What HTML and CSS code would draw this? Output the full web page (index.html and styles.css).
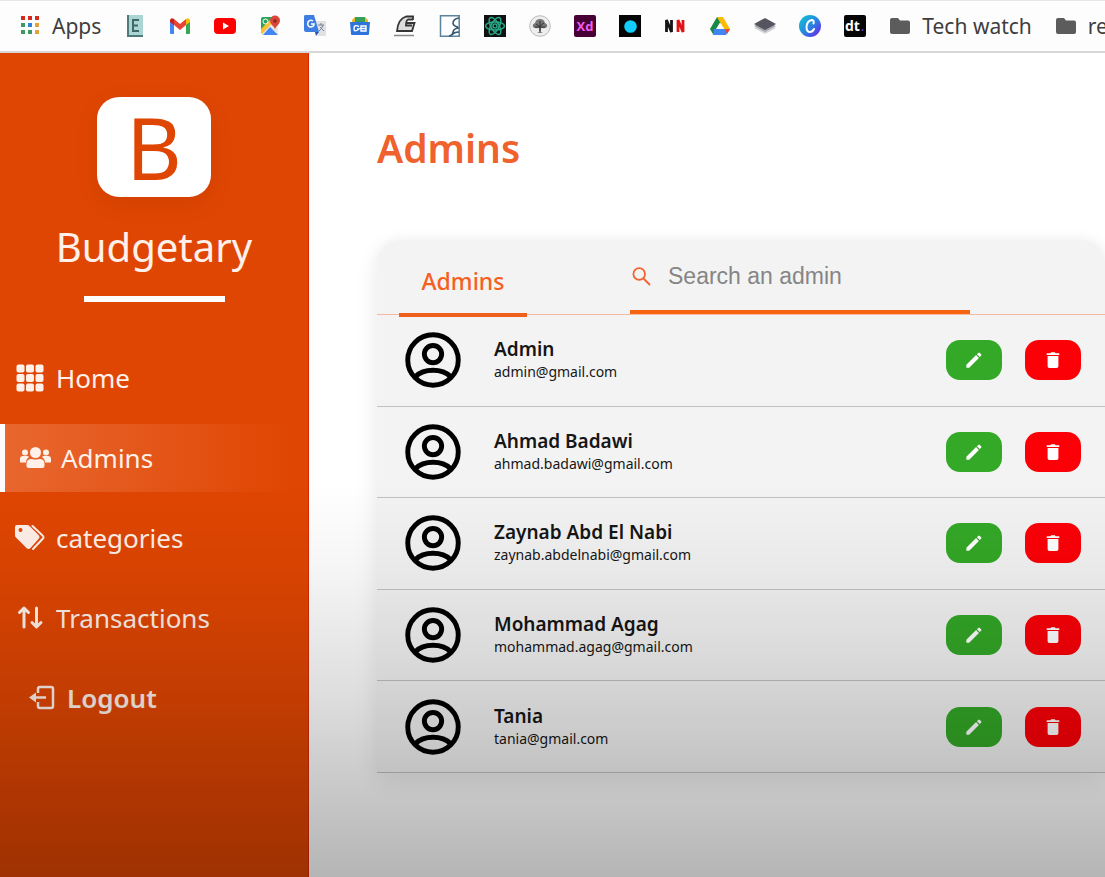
FILE: index.html
```html
<!DOCTYPE html>
<html lang="en">
<head>
<meta charset="utf-8">
<meta name="viewport" content="width=device-width, initial-scale=1">
<title>Budgetary - Admins</title>
<link rel="stylesheet" href="styles.css">
</head>
<body>
<svg class="sprite" aria-hidden="true">
  <symbol id="avatar" viewBox="0 0 57 57">
    <g fill="none" stroke="#000" stroke-width="5">
      <circle cx="28.500" cy="28.500" r="25.700"/>
      <circle cx="28.500" cy="22.500" r="8.800"/>
      <path d="M10.500 45.500C15 41 22 39 28.500 39s13.500 2 18 6.500"/>
    </g>
  </symbol>
  <symbol id="pencil" viewBox="0 0 20 20">
    <path fill="currentColor" d="M1.500 15.300 12.300 4.500l3.200 3.200L4.700 18.500H1.500zM13.200 3.600l1.500-1.500q.9-.8 1.800 0l1.400 1.400q.8.900 0 1.800l-1.500 1.500z"/>
  </symbol>
  <symbol id="trash" viewBox="0 0 20 20">
    <path fill="currentColor" d="M3 2.500h4L8 1.300h4l1 1.200h4v2H3zM4 5.500h12V17q0 2-2 2H6q-2 0-2-2z"/>
  </symbol>
  <symbol id="folder" viewBox="0 0 22 22">
    <path fill="#5c5c5c" d="M1 5q0-2 2-2h6l2 2.500h8q2 0 2 2V17q0 2-2 2H3q-2 0-2-2z"/>
  </symbol>
</svg>

<nav class="bookmarks" aria-label="Bookmarks">
  <a class="bookmark apps" href="#">
    <svg class="favicon" viewBox="0 0 22 22" aria-hidden="true">
      <path fill="#d62b1f" d="M2 1h4v4H2zM9 1h4v4H9zM16 1h4v4h-4z"/>
      <path fill="#3f9a62" d="M2 8h4v4H2zM2 15h4v4H2zM9 15h4v4H9z"/>
      <path fill="#2f82dc" d="M9 8h4v4H9z"/>
      <path fill="#e3a139" d="M16 8h4v4h-4zM16 15h4v4h-4z"/>
    </svg>
    <span>Apps</span>
  </a>
  <a class="bookmark" href="#" aria-label="E"><svg class="favicon" viewBox="0 0 22 22"><path fill="#a9d5d2" d="M3 0h16v22H3z"/><path fill="#507a7a" d="M3 0h2v22H3zM3 20h16v2H3z"/><path fill="none" stroke="#40666a" stroke-width="2" d="M15 5H9v11h6M9 10.500h5"/></svg></a>
  <a class="bookmark" href="#" aria-label="Gmail"><svg class="favicon" viewBox="0 0 22 22"><path fill="#4285f4" d="M1 6l4 3v10H2q-1 0-1-1z"/><path fill="#34a853" d="M17 9l4-3v12q0 1-1 1h-3z"/><path fill="#ea4335" d="M5 4l6 5 6-5v6l-6 5-6-5z"/><path fill="#c5221f" d="M1 5q1-3 4-1v6L1 7z"/><path fill="#fbbc04" d="M21 5q-1-3-4-1v6l4-3z"/></svg></a>
  <a class="bookmark" href="#" aria-label="YouTube"><svg class="favicon" viewBox="0 0 22 22"><rect y="3" width="22" height="16" rx="4" fill="#f00"/><path fill="#fff" d="M9 7.500l6 3.500-6 3.500z"/></svg></a>
  <a class="bookmark" href="#" aria-label="Maps"><svg class="favicon" viewBox="0 0 22 22"><rect x="2" y="2" width="17" height="18" rx="2" fill="#e6e7e8"/><path fill="#2ca45c" d="M4 2h12L2 16V4q0-2 2-2z"/><path fill="#fbc02d" d="M2 18v-4L14 2l3 2L3 19z"/><path fill="#4285f4" d="M4 20l7-8 8 8z"/><circle cx="6.500" cy="6.500" r="2.500" fill="none" stroke="#fff"/><path fill="#d9453a" d="M16 15c0-4-5-5-5-9.500a5 5 0 0 1 10 0C21 10 16 11 16 15z"/><circle cx="16" cy="6" r="1.800" fill="#8c2720"/></svg></a>
  <a class="bookmark" href="#" aria-label="Translate"><svg class="favicon" viewBox="0 0 22 22"><path fill="#dfe2e5" d="M9 6h12q1 0 1 1v13q0 1-1 1h-7z"/><path fill="#3f7de0" d="M1 0h9l5 17H2q-2 0-2-2V2q0-2 1-2z"/><path fill="#2b53a5" d="M11 17h4l-3 4z"/><path fill="none" stroke="#fff" stroke-width="1.500" d="M9 6Q6 4 4 7q-1 4 2 5 4 0 4-3H7"/><path fill="none" stroke="#78838e" d="M14 10h6M17 8v2M19 10q-1 4-4 6M16 12l4 4"/></svg></a>
  <a class="bookmark" href="#" aria-label="Classroom"><svg class="favicon" viewBox="0 0 22 22"><path fill="#e9b62c" d="M3 5l3-3h10l3 3v3H3z"/><path fill="#36a05b" d="M6 2h10v5H6z"/><path fill="#2f74dd" d="M1 7h20l-1 12q0 1-1 1H3q-1 0-1-1z"/><path fill="none" stroke="#fff" stroke-width="1.400" d="M10 11.500Q5 9 5 13.500T10 14H8M12 11h5v5h-5zM12 13.500h5"/></svg></a>
  <a class="bookmark" href="#" aria-label="Sketch"><svg class="favicon" viewBox="0 0 22 22"><path fill="#ddd" d="M3 16q0-12 8-15h8v2h-6v5h8l-2 8z"/><path fill="none" stroke="#353535" stroke-width="1.800" d="M19 5V1.500h-7Q4 4 3 16h15l2.500-8H12M19 4.500h-5q-2 1-2 6h6"/><path stroke="#888" stroke-width="1.500" d="M0 20.500h20"/></svg></a>
  <a class="bookmark" href="#" aria-label="Profile"><svg class="favicon" viewBox="0 0 22 22"><path fill="#fff" stroke="#5d829b" stroke-width="1.500" d="M1.500.8h18.700v20.400H1.500z"/><path fill="none" stroke="#35566f" stroke-width="1.600" d="M20 3q-6 1-6 5 0 3 5 4M20 13q-5 0-6 4 0 3-4 4M13 20q2-3 7-3"/></svg></a>
  <a class="bookmark" href="#" aria-label="React"><svg class="favicon" viewBox="0 0 22 22"><path fill="#111" d="M0 0h22v22H0z"/><g fill="none" stroke="#26a887" stroke-width="1.500"><ellipse cx="11" cy="11" rx="9.500" ry="4"/><ellipse cx="11" cy="11" rx="9.500" ry="4" transform="rotate(60 11 11)"/><ellipse cx="11" cy="11" rx="9.500" ry="4" transform="rotate(120 11 11)"/><circle cx="11" cy="11" r="2"/></g></svg></a>
  <a class="bookmark" href="#" aria-label="Tree"><svg class="favicon" viewBox="0 0 22 22"><circle cx="11" cy="11" r="10.300" fill="#eee" stroke="#bbb"/><path fill="#777" d="M4 12q-1-3 2-4 1-4 5-4t5 4q3 1 2 4-2 2-6 1v4l2 1H8l2-1v-4q-4 1-6-1z"/><path fill="none" stroke="#333" d="M11 16V6M11 12L7 9M11 11l4-3M6 12h10"/></svg></a>
  <a class="bookmark" href="#" aria-label="Adobe Xd"><svg class="favicon" viewBox="0 0 22 22"><rect width="22" height="22" rx="2" fill="#470137"/><text class="mark mark-xd" x="11" y="16" text-anchor="middle">Xd</text></svg></a>
  <a class="bookmark" href="#" aria-label="Circle"><svg class="favicon" viewBox="0 0 22 22"><path fill="#050505" d="M0 0h22v22H0z"/><circle cx="11.500" cy="11.500" r="6.300" fill="#12cdfb"/></svg></a>
  <a class="bookmark" href="#" aria-label="NN"><svg class="favicon" viewBox="0 0 22 22"><path fill="none" stroke="#151515" stroke-width="2.800" d="M2.500 17V5l5 12V5"/><path fill="none" stroke="#df1515" stroke-width="2.800" d="M14 17V5l5 12V5"/></svg></a>
  <a class="bookmark" href="#" aria-label="Drive"><svg class="favicon" viewBox="0 0 22 22"><path fill="#188a45" d="M8 2h3l2 4L4.500 20 1 14z"/><path fill="#fbbc04" d="M8 2h6l7 12h-6z"/><path fill="#4285f4" d="M5 14h16l-4 6H4z"/><path fill="#fff" d="M11 7.500l4 6.500H7z"/><path fill="#ea4335" d="M16 14h5l-3 5z"/></svg></a>
  <a class="bookmark" href="#" aria-label="Layers"><svg class="favicon" viewBox="0 0 22 22"><path fill="#d5d5da" d="M0 13l11-5 11 5-11 6z"/><path fill="#a5a5ad" d="M0 11l11-5 11 5-11 6z"/><path fill="#555560" d="M0 9l11-6 11 6-11 6z"/></svg></a>
  <a class="bookmark" href="#" aria-label="Canva"><svg class="favicon" viewBox="0 0 22 22"><defs><linearGradient id="canva" x1="0" y1="0" x2="1" y2="1"><stop offset="0" stop-color="#10c9d5"/><stop offset=".5" stop-color="#2588df"/><stop offset="1" stop-color="#7616ed"/></linearGradient></defs><circle cx="11" cy="11" r="11" fill="url(#canva)"/><path fill="none" stroke="#fff" stroke-width="2" stroke-linecap="round" d="M14.500 8.500q1-3.500-2-3.500Q8 6 7.500 12q0 5 3.500 5 2.500 0 4-3"/></svg></a>
  <a class="bookmark" href="#" aria-label="dt"><svg class="favicon" viewBox="0 0 22 22"><rect width="22" height="22" rx="2" fill="#050505"/><text class="mark mark-dt" x="1" y="16">dt</text><circle cx="18.500" cy="15" r="1" fill="#5b3fd0"/></svg></a>
  <a class="bookmark" href="#"><svg class="favicon" aria-hidden="true"><use href="#folder"/></svg><span>Tech watch</span></a>
  <a class="bookmark" href="#"><svg class="favicon" aria-hidden="true"><use href="#folder"/></svg><span>re</span></a>
</nav>

<div class="layout">
  <aside class="sidebar">
    <div class="brand">
      <div class="brand-logo" aria-hidden="true">B</div>
      <div class="brand-name">Budgetary</div>
    </div>
    <nav class="menu" aria-label="Main">
      <a class="menu-item" href="#">
        <svg class="menu-icon" viewBox="0 0 32 32" fill="currentColor" aria-hidden="true"><rect x="2.500" y="2.500" width="8" height="8" rx="2"/><rect x="12" y="2.500" width="8" height="8" rx="2"/><rect x="21.500" y="2.500" width="8" height="8" rx="2"/><rect x="2.500" y="12" width="8" height="8" rx="2"/><rect x="12" y="12" width="8" height="8" rx="2"/><rect x="21.500" y="12" width="8" height="8" rx="2"/><rect x="2.500" y="21.500" width="8" height="8" rx="2"/><rect x="12" y="21.500" width="8" height="8" rx="2"/><rect x="21.500" y="21.500" width="8" height="8" rx="2"/></svg>
        <span>Home</span>
      </a>
      <a class="menu-item active" href="#" aria-current="page">
        <svg class="menu-icon" viewBox="0 0 32 32" fill="currentColor" aria-hidden="true"><circle cx="6" cy="10.500" r="3"/><circle cx="27" cy="10.500" r="3"/><circle cx="16.500" cy="10.500" r="5.500"/><path d="M1 20v-3q0-3 3-3h4q1.500 0 2 1-3 2-3 5.500H2q-1 0-1-.5zM32 20v-3q0-3-3-3h-4q-1.500 0-2 1 3 2 3 5.500h5q1 0 1-.5zM7.500 24v-2q0-5 5-5 4 1.200 8 0 5 0 5 5v2q0 2-2 2h-14q-2 0-2-2z"/></svg>
        <span>Admins</span>
      </a>
      <a class="menu-item" href="#">
        <svg class="menu-icon" viewBox="0 0 32 32" aria-hidden="true"><path fill="currentColor" fill-rule="evenodd" d="M1 5q0-2 2-2h10q1.500 0 2.500 1l9 9q2 2 0 4l-8 9q-2 2-4 0L2 15.500Q1 14.500 1 13zM8.500 8a2 2 0 1 0-4 0 2 2 0 0 0 4 0z"/><path fill="none" stroke="currentColor" stroke-width="2" stroke-linecap="round" d="M18.500 4l10 9.500q2 1.500 0 3.500l-9.500 10"/></svg>
        <span>categories</span>
      </a>
      <a class="menu-item" href="#">
        <svg class="menu-icon" viewBox="0 0 32 32" aria-hidden="true"><path fill="none" stroke="currentColor" stroke-width="3" stroke-linecap="round" stroke-linejoin="round" d="M10 25V6M5.500 10.500L10 6l4.500 4.500M22.500 6v19M18 20.500l4.500 4.500 4.500-4.500"/></svg>
        <span>Transactions</span>
      </a>
      <button class="menu-item logout" type="button">
        <svg class="menu-icon" viewBox="0 0 32 32" aria-hidden="true"><path fill="none" stroke="currentColor" stroke-width="2.500" stroke-linejoin="round" d="M13 11V7q0-2 2-2h11q2 0 2 2v17q0 2-2 2H15q-2 0-2-2v-4M9 15.500h12"/><path fill="currentColor" d="M4 15.500l7-5v10z"/></svg>
        <span>Logout</span>
      </button>
    </nav>
  </aside>

  <main class="content">
    <h1 class="page-title">Admins</h1>
    <section class="card">
      <header class="card-header">
        <a class="tab" href="#">Admins</a>
        <label class="search">
          <svg class="search-icon" viewBox="0 0 20 20" aria-hidden="true"><path fill="none" stroke="#f26230" stroke-width="1.800" d="M11.500 12.500L18 19M13 8a5.800 5.800 0 1 1-11.600 0A5.800 5.800 0 0 1 13 8z"/></svg>
          <input class="search-input" type="search" placeholder="Search an admin" aria-label="Search an admin">
        </label>
      </header>
      <table class="admins">
        <tbody>
          <tr>
            <td class="cell-avatar"><svg class="avatar" aria-hidden="true"><use href="#avatar"/></svg></td>
            <td class="cell-person"><div class="name">Admin</div><div class="email">admin@gmail.com</div></td>
            <td class="cell-actions"><div class="actions"><button class="action edit" type="button" aria-label="Edit Admin"><svg class="action-icon"><use href="#pencil"/></svg></button><button class="action delete" type="button" aria-label="Delete Admin"><svg class="action-icon"><use href="#trash"/></svg></button></div></td>
          </tr>
          <tr>
            <td class="cell-avatar"><svg class="avatar" aria-hidden="true"><use href="#avatar"/></svg></td>
            <td class="cell-person"><div class="name">Ahmad Badawi</div><div class="email">ahmad.badawi@gmail.com</div></td>
            <td class="cell-actions"><div class="actions"><button class="action edit" type="button" aria-label="Edit Ahmad Badawi"><svg class="action-icon"><use href="#pencil"/></svg></button><button class="action delete" type="button" aria-label="Delete Ahmad Badawi"><svg class="action-icon"><use href="#trash"/></svg></button></div></td>
          </tr>
          <tr>
            <td class="cell-avatar"><svg class="avatar" aria-hidden="true"><use href="#avatar"/></svg></td>
            <td class="cell-person"><div class="name">Zaynab Abd El Nabi</div><div class="email">zaynab.abdelnabi@gmail.com</div></td>
            <td class="cell-actions"><div class="actions"><button class="action edit" type="button" aria-label="Edit Zaynab Abd El Nabi"><svg class="action-icon"><use href="#pencil"/></svg></button><button class="action delete" type="button" aria-label="Delete Zaynab Abd El Nabi"><svg class="action-icon"><use href="#trash"/></svg></button></div></td>
          </tr>
          <tr>
            <td class="cell-avatar"><svg class="avatar" aria-hidden="true"><use href="#avatar"/></svg></td>
            <td class="cell-person"><div class="name">Mohammad Agag</div><div class="email">mohammad.agag@gmail.com</div></td>
            <td class="cell-actions"><div class="actions"><button class="action edit" type="button" aria-label="Edit Mohammad Agag"><svg class="action-icon"><use href="#pencil"/></svg></button><button class="action delete" type="button" aria-label="Delete Mohammad Agag"><svg class="action-icon"><use href="#trash"/></svg></button></div></td>
          </tr>
          <tr>
            <td class="cell-avatar"><svg class="avatar" aria-hidden="true"><use href="#avatar"/></svg></td>
            <td class="cell-person"><div class="name">Tania</div><div class="email">tania@gmail.com</div></td>
            <td class="cell-actions"><div class="actions"><button class="action edit" type="button" aria-label="Edit Tania"><svg class="action-icon"><use href="#pencil"/></svg></button><button class="action delete" type="button" aria-label="Delete Tania"><svg class="action-icon"><use href="#trash"/></svg></button></div></td>
          </tr>
        </tbody>
      </table>
    </section>
  </main>
</div>
</body>
</html>
```

FILE: styles.css
```css
* {
  box-sizing: border-box;
}

body {
  display: flex;
  flex-direction: column;
  min-height: 100vh;
  margin: 0;
  background: #fff;
  color: #161616;
  font-family: "Noto Sans", "Open Sans", sans-serif;
  overflow-x: hidden;
}

/* shade that deepens toward the bottom of the window */
body::after {
  content: "";
  position: fixed;
  inset: 0;
  background: linear-gradient(rgba(0, 0, 0, 0) 55%, rgba(0, 0, 0, 0.04) 65%, rgba(0, 0, 0, 0.13) 79%, rgba(0, 0, 0, 0.29) 100%);
  pointer-events: none;
}

a {
  color: inherit;
  text-decoration: none;
}

button {
  border: 0;
  cursor: pointer;
  font: inherit;
}

.sprite {
  display: none;
}

/* bookmarks bar */
.bookmarks {
  display: flex;
  align-items: center;
  gap: 23px;
  height: 53px;
  padding-left: 19px;
  border-top: 1px solid #e9e7e9;
  border-bottom: 2px solid #d9d7da;
  background: #fefdfe;
  overflow: hidden;
}

.bookmark {
  display: flex;
  flex: none;
  align-items: center;
  gap: 11px;
  color: #3d3d3d;
  font-size: 21px;
  line-height: 24px;
}

.favicon {
  display: block;
  width: 22px;
  height: 22px;
}

.mark {
  font-family: "Open Sans", sans-serif;
  font-weight: 700;
}

.mark-xd {
  fill: #f05cf0;
  font-size: 13px;
}

.mark-dt {
  fill: #fff;
  font-size: 14px;
}

.layout {
  display: flex;
  flex: 1;
}

/* sidebar */
.sidebar {
  flex: none;
  width: 309px;
  border-right: 1px solid #d92800;
  background: #e04603;
  color: #fff1ea;
}

.brand {
  display: flex;
  flex-direction: column;
  align-items: center;
  padding-top: 44px;
}

.brand-logo {
  display: flex;
  align-items: center;
  justify-content: center;
  width: 114px;
  height: 100px;
  border-radius: 22px;
  background: #fff;
  box-shadow: 0 7px 24px rgba(0, 0, 0, 0.08);
  color: #e04603;
  font-size: 86px;
  line-height: 100px;
}

.brand-name {
  margin-top: 22px;
  font-size: 40px;
  line-height: 56px;
}

.brand-name::after {
  content: "";
  display: block;
  width: 141px;
  height: 6px;
  margin: 21px auto 0;
  background: #fff;
}

.menu {
  display: flex;
  flex-direction: column;
  gap: 12px;
  padding-top: 42px;
}

.menu-item {
  display: flex;
  align-items: center;
  gap: 10px;
  height: 68px;
  padding: 0 14px;
  background: none;
  color: inherit;
  font-size: 26px;
  line-height: 32px;
  text-align: left;
}

.menu-icon {
  flex: none;
  width: 32px;
  height: 32px;
}

.menu-item.active {
  border-left: 5px solid #fff;
  background: linear-gradient(90deg, #e8672f, #e04603 95%);
}

.menu-item.logout {
  padding-left: 25px;
  font-weight: 600;
}

/* main area */
.content {
  flex: 1;
  min-width: 0;
  padding: 67px 0 68px 68px;
}

.page-title {
  margin: 0;
  color: #ef622e;
  font-size: 39px;
  font-weight: 600;
  line-height: 56px;
}

.card {
  margin-top: 64px;
  border-radius: 24px 24px 0 0;
  background: #f3f3f3;
  box-shadow: 0 -1px 8px #f3f3f3, 0 8px 24px rgba(0, 0, 0, 0.09);
}

.card-header {
  display: flex;
  align-items: flex-end;
  gap: 103px;
  height: 75px;
  padding-left: 22px;
  border-bottom: 1px solid #f6b9a4;
}

.tab {
  width: 128px;
  margin-bottom: -3px;
  padding-bottom: 16px;
  border-bottom: 4px solid #f0601c;
  color: #f5601f;
  font-size: 23px;
  font-weight: 500;
  line-height: 32px;
  text-align: center;
}

.search {
  display: flex;
  align-items: center;
  gap: 16px;
  width: 340px;
  padding: 0 0 18px 2px;
  border-bottom: 4px solid #f76310;
}

.search-icon {
  flex: none;
  width: 20px;
  height: 20px;
}

.search-input {
  flex: 1;
  min-width: 0;
  padding: 0;
  border: 0;
  outline: 0;
  background: none;
  color: #333;
  font-family: "Liberation Sans", Arial, sans-serif;
  font-size: 23px;
  line-height: 32px;
}

.search-input::placeholder {
  color: #858585;
}

.admins {
  width: 100%;
  height: 458px;
  border-spacing: 0;
}

.admins td {
  padding: 0;
  border-bottom: 1px solid rgba(0, 0, 0, 0.2);
  vertical-align: middle;
}

.admins .cell-avatar {
  width: 117px;
  padding-left: 27px;
}

.avatar {
  display: block;
  width: 58px;
  height: 56px;
}

.name {
  font-size: 19px;
  font-weight: 600;
  line-height: 24px;
}

.email {
  font-size: 14px;
  line-height: 22px;
}

.actions {
  display: flex;
  justify-content: flex-end;
  gap: 23px;
  padding-right: 24px;
}

.action {
  display: flex;
  align-items: center;
  justify-content: center;
  width: 56px;
  height: 40px;
  padding: 0;
  border-radius: 14px;
  color: #fff;
}

.action-icon {
  width: 18px;
  height: 18px;
}

.edit {
  background: #34a827;
}

.delete {
  background: #fc0008;
}
```
